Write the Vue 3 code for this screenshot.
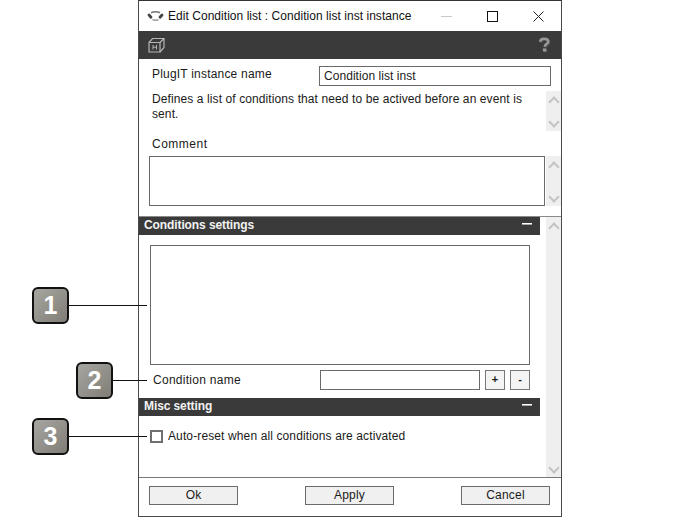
<template>
  <div class="page">
    <div class="window">
      <!-- title bar -->
      <div class="titlebar">
        <svg class="app-icon" width="17" height="10" viewBox="0 0 17 10" fill="none">
          <path d="M4 1.8C6.5 0.6 10.5 0.6 13 1.8" stroke="#777" stroke-width="1.5" />
          <path d="M2 4L4 6.2M15 4L13 6.2" stroke="#444" stroke-width="2.8" stroke-linecap="round" />
          <path d="M5.5 8.6C7.5 9.4 9.5 9.4 11.5 8.6" stroke="#888" stroke-width="1.3" />
        </svg>
        <span class="title">Edit Condition list : Condition list inst instance</span>
        <div class="win-controls">
          <svg width="11" height="11" viewBox="0 0 11 11"><path d="M0 5.5H11" stroke="#c8c8c8" /></svg>
          <svg width="11" height="11" viewBox="0 0 11 11"><rect x="0.5" y="0.5" width="10" height="10" fill="none" stroke="#111" /></svg>
          <svg width="11" height="11" viewBox="0 0 11 11"><path d="M0.5 0.5L10.5 10.5M10.5 0.5L0.5 10.5" stroke="#222" /></svg>
        </div>
      </div>

      <!-- toolbar -->
      <div class="toolbar">
        <svg width="17" height="16" viewBox="0 0 17 16" fill="none" stroke="#b4b4b4" stroke-width="1.2">
          <path d="M1 5.5H12V15H1Z" />
          <path d="M1 5.5L4.5 1.5H16V10.5L12 15M12 5.5L16 1.5" />
          <path d="M5 8V12.5M8.5 8V12.5M5 10.2H8.5" stroke-width="1" />
        </svg>
        <svg width="13" height="16" viewBox="0 0 13 16" fill="none">
          <path d="M3 5.5C3 3.5 4.5 2.5 7 2.5C9.5 2.5 11 3.7 11 5.5C11 7.5 7.5 7.8 7.5 10.5" stroke="#555" stroke-width="2.6" />
          <rect x="5.7" y="12.2" width="3.4" height="3" fill="#555" />
          <path d="M2.2 4.7C2.2 2.7 3.7 1.7 6.2 1.7C8.7 1.7 10.2 2.9 10.2 4.7C10.2 6.7 6.7 7 6.7 9.7" stroke="#999" stroke-width="2.6" />
          <rect x="4.9" y="11.4" width="3.4" height="3" fill="#999" />
        </svg>
      </div>

      <!-- instance block -->
      <div class="top">
        <div class="name-row">
          <label class="name-label">PlugIT instance name</label>
          <div class="field name-field">Condition list inst</div>
        </div>
        <div class="desc-row">
          <p class="desc">Defines a list of conditions that need to be actived before an event is sent.</p>
          <div class="scroll">
            <span class="chev up"></span>
            <span class="chev down"></span>
          </div>
        </div>
        <div class="comment-label">Comment</div>
        <div class="comment-row">
          <div class="field comment-box"></div>
          <div class="scroll">
            <span class="chev up"></span>
            <span class="chev down"></span>
          </div>
        </div>
      </div>

      <!-- settings -->
      <div class="middle">
        <div class="sections">
          <div class="section-head">
            <span class="section-title">Conditions settings</span>
            <i class="collapse"></i>
          </div>
          <div class="conditions">
            <div class="field list-box"></div>
            <div class="cond-row">
              <span class="cond-label">Condition name</span>
              <div class="field cond-input"></div>
              <div class="small-btn">+</div>
              <div class="small-btn">-</div>
            </div>
          </div>
          <div class="section-head">
            <span class="section-title">Misc setting</span>
            <i class="collapse"></i>
          </div>
          <div class="misc">
            <span class="check"></span>
            <span class="misc-label">Auto-reset when all conditions are activated</span>
          </div>
        </div>
        <div class="scroll">
          <span class="chev up"></span>
          <span class="chev down"></span>
        </div>
      </div>

      <!-- footer -->
      <div class="footer">
        <div class="btn">Ok</div>
        <div class="btn">Apply</div>
        <div class="btn">Cancel</div>
      </div>
    </div>

    <!-- numbered callouts over the screenshot -->
    <div v-for="c in callouts" :key="c.n" class="callout" :style="{ left: c.x + 'px', top: c.y + 'px' }">
      <div class="badge">{{ c.n }}</div>
      <div class="leader" :style="{ width: c.line + 'px' }"></div>
    </div>
  </div>
</template>

<script setup>
const callouts = [
  { n: 1, x: 32, y: 287, line: 78 },
  { n: 2, x: 76, y: 362, line: 34 },
  { n: 3, x: 32, y: 418, line: 78 },
];
</script>

<style scoped>
.page {
  position: relative;
  width: 700px;
  height: 517px;
  overflow: hidden;
  background: #fff;
  font-family: "Liberation Sans", Arial, sans-serif;
  font-size: 12px;
  color: #1a1a1a;
}

.window {
  box-sizing: border-box;
  width: 424px;
  height: 517px;
  margin-left: 138px;
  border: 1px solid #4a4a4a;
  border-top-color: #333;
  display: flex;
  flex-direction: column;
}

.titlebar {
  height: 30px;
  display: flex;
  align-items: center;
  padding-left: 8px;
  flex: none;
}

.title {
  margin-left: 4px;
  color: #111;
  font-size: 12px;
  letter-spacing: 0.04px;
}

.win-controls {
  margin-left: auto;
  width: 120px;
  padding-right: 17px;
  box-sizing: border-box;
  display: flex;
  justify-content: space-between;
}

.toolbar {
  height: 28px;
  flex: none;
  background: #3a3a3a;
  display: flex;
  align-items: center;
  justify-content: space-between;
  padding: 0 10px 0 9px;
}

.top {
  flex: none;
  height: 158px;
  box-sizing: border-box;
  border-bottom: 1px solid #8a8a8a;
  padding-top: 7px;
}

.field {
  box-sizing: border-box;
  border: 1px solid #6a6a6a;
  background: #fff;
}

.name-row {
  display: flex;
  align-items: flex-start;
  padding-left: 13px;
}

.name-label {
  width: 167px;
  line-height: 17px;
  letter-spacing: 0.2px;
}

.name-field {
  width: 232px;
  height: 20px;
  line-height: 18px;
  padding-left: 4px;
  letter-spacing: 0.05px;
}

.desc-row {
  display: flex;
  height: 40px;
  margin-top: 5px;
}

.desc {
  margin: 0;
  width: 394px;
  padding: 1px 0 0 13px;
  box-sizing: border-box;
  line-height: 15px;
  flex: none;
  letter-spacing: 0.1px;
}

.desc-row .scroll {
  margin-left: 13px;
}

.comment-label {
  margin: 6px 0 0 13px;
  line-height: 14px;
  letter-spacing: 0.5px;
}

.comment-row {
  display: flex;
  height: 50px;
  margin-top: 5px;
  padding-left: 10px;
}

.comment-box {
  width: 396px;
  height: 50px;
  margin-right: 1px;
}

.scroll {
  width: 15px;
  flex: none;
  background: #efefef;
  display: flex;
  flex-direction: column;
  justify-content: space-between;
  align-items: center;
  padding: 5px 0 3px;
  box-sizing: border-box;
}

.chev {
  display: block;
  width: 6px;
  height: 6px;
  border: solid #c4c4c4;
  border-width: 2px 0 0 2px;
  margin: 2px 0;
}

.chev.up {
  transform: rotate(45deg);
}

.chev.down {
  transform: rotate(225deg);
}

.middle {
  flex: none;
  height: 260px;
  display: flex;
  justify-content: space-between;
}

.sections {
  width: 401px;
  flex: none;
}

.section-head {
  height: 18px;
  background: #3a3a3a;
  color: #f2f2f2;
  font-weight: bold;
  line-height: 17px;
  padding: 0 8px 0 5px;
  display: flex;
  justify-content: space-between;
  align-items: center;
  letter-spacing: -0.1px;
}

.section-title {
  margin-bottom: 2px;
}

.collapse {
  width: 10px;
  height: 1px;
  margin-bottom: 4px;
  background: #fff;
  border-bottom: 1px solid #aaa;
}

.conditions {
  height: 163px;
  box-sizing: border-box;
  padding: 10px 0 0 11px;
}

.list-box {
  width: 380px;
  height: 120px;
}

.cond-row {
  display: flex;
  align-items: center;
  margin-top: 5px;
  height: 20px;
}

.cond-label {
  width: 170px;
  padding-left: 3px;
  box-sizing: border-box;
  letter-spacing: 0.28px;
}

.cond-input {
  width: 160px;
  height: 20px;
}

.small-btn {
  box-sizing: border-box;
  width: 20px;
  height: 20px;
  border: 1px solid #777;
  background: #f4f4f4;
  margin-left: 5px;
  text-align: center;
  line-height: 16px;
  font-weight: bold;
  font-size: 11px;
}

.misc {
  display: flex;
  align-items: center;
  padding: 13px 0 0 11px;
  line-height: 14px;
}

.misc-label {
  letter-spacing: 0.12px;
}

.check {
  box-sizing: border-box;
  width: 13px;
  height: 13px;
  border: 2px solid #707070;
  background: #fff;
  margin-right: 5px;
}

.footer {
  flex: 1;
  border-top: 1px solid #777;
  display: flex;
  justify-content: space-between;
  padding: 8px 11px 0 10px;
}

.btn {
  box-sizing: border-box;
  width: 89px;
  height: 19px;
  border: 1px solid #6a6a6a;
  background: #f0f0f0;
  text-align: center;
  line-height: 16px;
  letter-spacing: 0.2px;
}

.callout {
  position: absolute;
  display: flex;
  align-items: center;
}

.badge {
  box-sizing: border-box;
  width: 37px;
  height: 37px;
  border: 2px solid #111;
  border-radius: 6px;
  background: linear-gradient(135deg, #a8a6a0, #7f7d76);
  color: #fff;
  font-weight: bold;
  font-size: 25px;
  line-height: 33px;
  text-align: center;
}

.leader {
  height: 1px;
  background: #111;
}
</style>
